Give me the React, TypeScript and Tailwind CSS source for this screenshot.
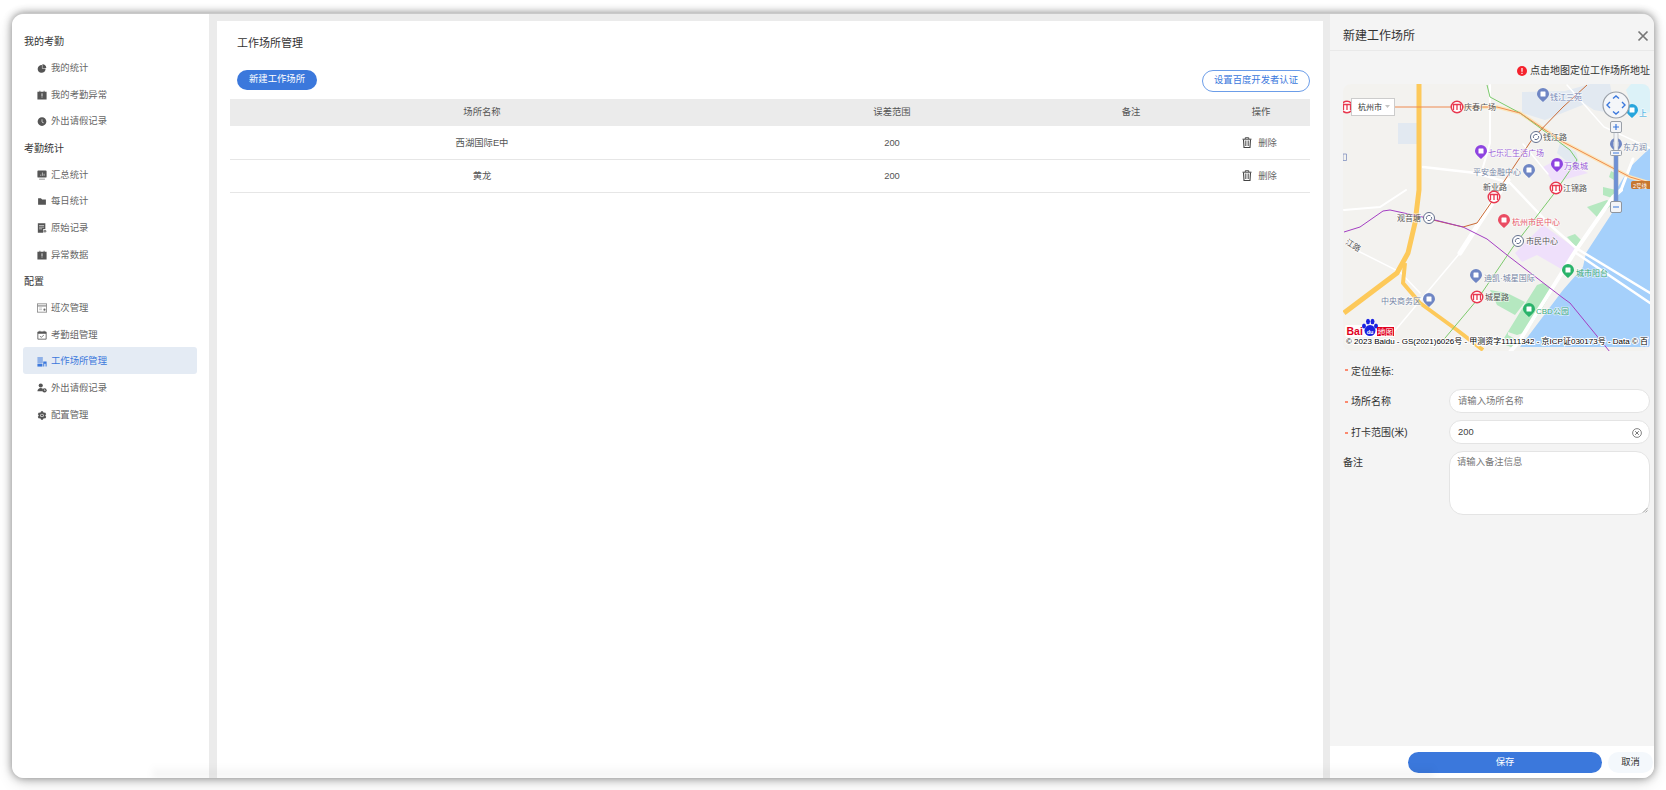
import { AiFillClockCircle, AiFillFolder, AiFillPieChart, AiFillSetting } from "react-icons/ai";

const sm = "h-[10px] w-[10px]";

function CalendarAlert() {
  return (
    <svg viewBox="0 0 12 12" className={sm}>
      <path d="M.5 2h2.500V.8h1V2h4V.8h1V2h2.500v9.500H.5z" fill="#555" />
      <rect x="5.500" y="4" width="1" height="3.500" fill="#fff" />
      <rect x="5.500" y="8" width="1" height="1" fill="#fff" />
    </svg>
  );
}

function MonitorIcon() {
  return (
    <svg viewBox="0 0 12 12" className={sm}>
      <path d="M1.500 .5h9a1 1 0 0 1 1 1v6.500a1 1 0 0 1-1 1h-9a1 1 0 0 1-1-1V1.500a1 1 0 0 1 1-1z" fill="#555" />
      <path d="M2.500 10.500h7v1h-7z" fill="#777" />
      <path d="M4.500 7V5.500M6.500 7V3M8.500 7V4.500" stroke="#fff" strokeWidth=".7" />
    </svg>
  );
}

function DocIcon() {
  return (
    <svg viewBox="0 0 12 12" className={sm}>
      <path d="M1 .3h9v7H7.500v4.400H1z" fill="#555" />
      <path d="M2.500 3h6M2.500 5h6M2.500 7h3.500" stroke="#fff" strokeWidth=".7" />
      <circle cx="9.500" cy="9.800" r="1.700" fill="#888" />
    </svg>
  );
}

function ShiftIcon() {
  return (
    <svg viewBox="0 0 12 12" className={sm}>
      <rect x=".5" y="1" width="11" height="10" fill="none" stroke="#888" strokeWidth="1" />
      <path d="M.5 3.500h11" stroke="#888" strokeWidth="1.400" />
      <path d="M2.500 6h3.500M2.500 8h3.500" stroke="#aaa" strokeWidth=".8" />
      <circle cx="9" cy="8" r="1.300" fill="#666" />
    </svg>
  );
}

function GroupCalendar() {
  return (
    <svg viewBox="0 0 12 12" className={sm}>
      <path d="M1 2.500h10v8.500H1z" fill="none" stroke="#555" strokeWidth="1" />
      <path d="M1 2h10v2.500H1zM3 1h1v1.500H3zM8 1h1v1.500H8z" fill="#555" />
      <path d="M3.500 7.500l1.700 1.200 3-2.500" fill="none" stroke="#555" strokeWidth=".9" />
    </svg>
  );
}

function BuildingIcon() {
  return (
    <svg viewBox="0 0 12 12" className={sm}>
      <path d="M.5 .5h6.500v1.200H.5zM.5 3h6.500v1.200H.5zM.5 5.500h6.500v1.200H.5z" fill="#3b78dc" />
      <path d="M.5 8h6v3.500h-6z" fill="#3b78dc" />
      <path d="M7.500 5.500h4v6h-1.200V8H8.700v3.500H7.500z" fill="#3b78dc" />
    </svg>
  );
}

function UserClock() {
  return (
    <svg viewBox="0 0 12 12" className={sm}>
      <circle cx="4.500" cy="3" r="2.500" fill="#555" />
      <path d="M.5 10c0-2.500 1.800-4 4-4 1 0 1.800.3 2.500.8V10z" fill="#555" />
      <circle cx="9" cy="8.800" r="2.600" fill="#555" />
      <path d="M9 7.500v1.500h1.200" stroke="#fff" strokeWidth=".7" fill="none" />
    </svg>
  );
}

function TrashIcon() {
  return (
    <svg viewBox="0 0 10 11" className="h-[11px] w-[10px]">
      <path d="M.5 2.200h9" stroke="#444" strokeWidth="1" />
      <path d="M3.300 2V.7h3.400V2" fill="none" stroke="#444" strokeWidth=".9" />
      <path d="M1.500 2.500l.5 8h6l.5-8" fill="none" stroke="#444" strokeWidth="1.100" />
      <path d="M3.800 3.500v5.500M6.200 3.500v5.500" stroke="#555" strokeWidth="1.100" />
    </svg>
  );
}

const gray = "text-[11px] text-[#555]";

const navGroups = [
  {
    title: "我的考勤",
    items: [
      { label: "我的统计", icon: <AiFillPieChart className={gray} /> },
      { label: "我的考勤异常", icon: <CalendarAlert /> },
      { label: "外出请假记录", icon: <AiFillClockCircle className={gray} /> },
    ],
  },
  {
    title: "考勤统计",
    items: [
      { label: "汇总统计", icon: <MonitorIcon /> },
      { label: "每日统计", icon: <AiFillFolder className={gray} /> },
      { label: "原始记录", icon: <DocIcon /> },
      { label: "异常数据", icon: <CalendarAlert /> },
    ],
  },
  {
    title: "配置",
    items: [
      { label: "班次管理", icon: <ShiftIcon /> },
      { label: "考勤组管理", icon: <GroupCalendar /> },
      { label: "工作场所管理", icon: <BuildingIcon />, active: true },
      { label: "外出请假记录", icon: <UserClock /> },
      { label: "配置管理", icon: <AiFillSetting className={gray} /> },
    ],
  },
];

const rows = [
  { name: "西湖国际E中", range: "200" },
  { name: "黄龙", range: "200" },
];

function Pin({ x, y, color }: { x: number; y: number; color: string }) {
  return (
    <g transform={`translate(${x} ${y})`}>
      <path d="M-6 -1a6 6 0 1 1 12 0c0 3-3 5-6 8c-3-3-6-5-6-8z" fill={color} />
      <rect x="-2.500" y="-3.500" width="5" height="5" rx=".5" fill="#fff" />
    </g>
  );
}

function Metro({ x, y }: { x: number; y: number }) {
  return (
    <g transform={`translate(${x} ${y})`}>
      <circle r="5.800" fill="#fff" stroke="#e8384f" strokeWidth="1.400" />
      <path d="M-3.500 3v-5.500h7V3M0 -2.500V3" fill="none" stroke="#e8384f" strokeWidth="1.300" />
    </g>
  );
}

function Rail({ x, y }: { x: number; y: number }) {
  return (
    <g transform={`translate(${x} ${y})`}>
      <circle r="5.500" fill="#fff" stroke="#63708e" strokeWidth="1" />
      <path d="M-2.500 1a2.700 2.700 0 0 1 4-3.200M2.500 -1a2.700 2.700 0 0 1-4 3.200" fill="none" stroke="#63708e" strokeWidth="1" />
    </g>
  );
}

function Label({ x, y, color, children }: { x: number; y: number; color: string; children: string }) {
  return (
    <text x={x} y={y} fill={color} fontSize="8" stroke="#fff" strokeWidth="1.500" strokeOpacity=".6" paintOrder="stroke">
      {children}
    </text>
  );
}

function BaiduMap() {
  return (
    <svg viewBox="0 0 307 267" className="block h-[267px] w-[307px]">
      <rect width="307" height="267" fill="#f3f2ef" />
      {/* blocks */}
      <path d="M55 39h19v21H55z" fill="#e2e9f1" />
      <path d="M179 8l43-1 25-7 20 0 6 30-22-4-9-6-20 8-20 8-23-7z" fill="#e2e9f1" />
      <path d="M217 59l16 9 4 14-15-6-8-7z" fill="#e2e9f1" />
      <path d="M288 0h19v28l-11 4-8-12-5-14z" fill="#dcf2f8" />
      <path d="M172 169l28-28 35 25-15 20-26-15-15 7z" fill="#efe0fb" />
      <path d="M200 83l17-9 28 15-25 7-10 2z" fill="#efe0fb" />
      {/* water */}
      <path d="M307 64l-20 19-14 23v17l-30 46-3 14-20 23-43 57h132z" fill="#a5d0fb" />
      {/* green */}
      <path d="M244 123l20-7 6 4-16 13z" fill="#b5e8c0" />
      <path d="M224 153l8-3 8 8-7 5z" fill="#b5e8c0" />
      <path d="M194 201l6-2 10 7-10 17-13 20-7 6-6 2-9-3v3l9 5-4 8-12-5 24-39z" fill="#b5e8c0" />
      <path d="M260 103l13 3-4 8-9-3zM268 87l6 3-3 6-5-3z" fill="#b5e8c0" />
      <path d="M147 206l17 3 18 9-10 13-18-10z" fill="#b5e8c0" />
      {/* white roads */}
      <g fill="none" stroke="#fff" strokeLinecap="round">
        <path d="M147 1v58l-7 24M1 126l36-3 26-17" strokeWidth="2" />
        <path d="M80 83l53 6 34 10 40 42 26 23 74 45M233 169l74 50" strokeWidth="2.500" />
        <path d="M224 1l37 42 46 21M180 60l25 30" strokeWidth="1.500" />
        <path d="M7 163l50 25 20 21M50 249l67-80" strokeWidth="1.500" />
        <path d="M165 96l-12 17-36 56" strokeWidth="5" />
        <path d="M278 106l-8 7-37 53-56 90-10 12" strokeWidth="4" />
        <path d="M290 75l-12 31" strokeWidth="3" />
      </g>
      {/* highway */}
      <g fill="none" strokeLinejoin="round">
        <path d="M114 23h40l23 6 43 29 67 35 20 6" stroke="#fbe6bb" strokeWidth="3.500" />
        <path d="M76 0v106l-4 33-7 30-11 20L1 229" stroke="#fdc95a" strokeWidth="5" />
        <path d="M62 179l-2 20 17 20 37 27 26 20" stroke="#fdc95a" strokeWidth="4" />
      </g>
      {/* metro lines */}
      <g fill="none">
        <path d="M144 1l3 12 30 16 50 37 7 10-24 35-40 52-36 53-37 44" stroke="#7cca6c" strokeWidth="1" />
        <path d="M51 23h103l23 6 43 29 67 35 20 6" stroke="#ee8a50" strokeWidth="1" />
        <path d="M244 1l-24 22-30 31-30 45-10 17-16 23-14 4-30-7" stroke="#c96a34" strokeWidth="1" />
        <path d="M1 148l16-5 23-16 7-1 37 8 36 9 24 12 20 16 56 43 7 5 40 49" stroke="#a33ec2" strokeWidth="1" />
      </g>
      {/* labels */}
      <Metro x={4} y={23} />
      <Metro x={114} y={23} />
      <Label x={121} y={26} color="#555">庆春广场</Label>
      <Pin x={200} y={11} color="#6f86c4" />
      <Label x={207} y={16} color="#7586b6">钱江三苑</Label>
      <Rail x={193} y={53} />
      <Label x={200} y={56} color="#555">钱江路</Label>
      <Pin x={138} y={68} color="#8e44e0" />
      <Label x={145} y={72} color="#9a5fd8">七乐汇生活广场</Label>
      <Label x={130} y={91} color="#7586a6">平安金融中心</Label>
      <Pin x={186} y={87} color="#6f86c4" />
      <Pin x={214} y={81} color="#8e44e0" />
      <Label x={221} y={85} color="#9a5fd8">万象城</Label>
      <Label x={140} y={106} color="#555">新业路</Label>
      <Metro x={213} y={104} />
      <Label x={220} y={107} color="#555">江锦路</Label>
      <Pin x={273} y={61} color="#6f86c4" />
      <Label x={280} y={66} color="#7586a6">东方润</Label>
      <Pin x={289} y={27} color="#27a5dc" />
      <Label x={296} y={32} color="#27a5dc">上</Label>
      <rect x="288" y="97" width="22" height="8" rx="2" fill="#c7772f" />
      <text x="290" y="103.500" fill="#fff" fontSize="5.500">2号线</text>
      <Metro x={151} y={113} />
      <Label x={54} y={137} color="#555">观音塘</Label>
      <Rail x={86} y={134} />
      <Pin x={161} y={137} color="#ea4c62" />
      <Label x={169} y={141} color="#e8586c">杭州市民中心</Label>
      <Rail x={175} y={157} />
      <Label x={183} y={160} color="#555">市民中心</Label>
      <Pin x={133} y={192} color="#6f86c4" />
      <Label x={141} y={197} color="#7586a6">迪凯·城星国际</Label>
      <Pin x={225} y={187} color="#2ab36a" />
      <Label x={233} y={192} color="#3aa97a">城市阳台</Label>
      <Label x={38} y={220} color="#7586a6">中央商务区</Label>
      <Pin x={86} y={216} color="#6f86c4" />
      <Metro x={134} y={213} />
      <Label x={142} y={216} color="#555">城星路</Label>
      <Pin x={186} y={226} color="#2ab36a" />
      <Label x={193} y={230} color="#3aa97a">CBD公园</Label>
      <g transform="rotate(32 4 156)">
        <Label x={4} y={160} color="#555">江路</Label>
      </g>
      <path d="M0 70h3.500v6.500H0z" fill="none" stroke="#8090c0" strokeWidth=".8" />
      {/* city control */}
      <rect x="8.500" y="14.500" width="43" height="17" fill="#fff" stroke="#ccc" />
      <text x="15" y="26" fill="#333" fontSize="8">杭州市</text>
      <path d="M42 21h5l-2.500 3z" fill="#c4c4c4" />
      {/* pan and zoom controls */}
      <rect x="271" y="45" width="4" height="24" fill="#f1f3f6" stroke="#a7abb3" strokeWidth=".6" />
      <rect x="271" y="69" width="4" height="54" fill="#6d90d6" stroke="#8b99bd" strokeWidth=".6" />
      <circle cx="273" cy="21" r="13" fill="#f4f6f9" stroke="#9aa0a8" strokeWidth="1.200" />
      <path d="M270 14.500l3-2.500 3 2.500M270 27.500l3 2.500 3-2.500M267 18l-3 3 3 3M279 18l3 3-3 3" fill="none" stroke="#3b78dc" strokeWidth="1.400" />
      <rect x="267.500" y="37.500" width="11" height="11" rx="1.500" fill="#f3f4f7" stroke="#9aa0a8" />
      <path d="M270 43h6M273 40v6" stroke="#3b78dc" strokeWidth="1.200" />
      <rect x="267.500" y="66.500" width="11" height="5" rx="1" fill="#f3f4f7" stroke="#9aa0a8" />
      <path d="M270 69h6" stroke="#3b78dc" strokeWidth="1" />
      <rect x="267.500" y="117.500" width="11" height="11" rx="1.500" fill="#f3f4f7" stroke="#8f959e" />
      <path d="M270 123h6" stroke="#3b78dc" strokeWidth="1.200" />
      {/* logo */}
      <rect x="2" y="241" width="50" height="12" rx="2" fill="#fff" opacity=".85" />
      <text x="3.500" y="251" fill="#e1001e" fontSize="10.500" fontWeight="700">Bai</text>
      <g fill="#1a22e0" stroke="#fff" strokeWidth=".6" paintOrder="stroke">
        <ellipse cx="27" cy="246.500" rx="5.500" ry="5.500" />
        <ellipse cx="21" cy="242" rx="2" ry="2.500" />
        <ellipse cx="25" cy="237.500" rx="2" ry="2.700" />
        <ellipse cx="29.500" cy="237.500" rx="2" ry="2.700" />
        <ellipse cx="33" cy="242" rx="2" ry="2.500" />
      </g>
      <text x="23.700" y="250" fill="#fff" fontSize="5.500" fontWeight="700">du</text>
      <rect x="34" y="243" width="17" height="9" fill="#e1001e" />
      <text x="34.500" y="250.500" fill="#fff" fontSize="8">地图</text>
      {/* copyright */}
      <text x="3" y="260" fill="#000" fontSize="8" stroke="#fff" strokeWidth="2" paintOrder="stroke">
        © 2023 Baidu - GS(2021)6026号 - 甲测资字11111342 - 京ICP证030173号 - Data © 百
      </text>
    </svg>
  );
}

function Star() {
  return <span className="absolute left-[-6px] top-[5px] h-[2px] w-[3px] bg-[#fb8a70]" />;
}

export default function App() {
  return (
    <div className="h-[790px] w-[1666px] overflow-hidden bg-white px-3 pb-3 pt-[13px] font-['Liberation_Sans','Noto_Sans_CJK_SC',sans-serif]">
      <div className="relative flex h-[765px] overflow-hidden rounded-xl border-t border-[#c9c9c9] bg-[#ebebeb] shadow-[0_0_9px_rgba(0,0,0,0.45),0_5px_16px_rgba(0,0,0,0.12)]">
        {/* Sidebar */}
        <aside className="w-[197px] shrink-0 bg-white pl-3 pr-3 pt-[13px]">
          {navGroups.map((group) => (
            <div key={group.title}>
              <div className="flex h-[26.67px] items-center pt-[3px] text-[10px] text-[#333]">{group.title}</div>
              {group.items.map((item, i) => (
                <div
                  key={i}
                  className={
                    item.active
                      ? "flex h-[26.67px] w-[174px] -translate-x-px items-center gap-[4px] rounded-[3px] bg-[#e4ebf4] pl-[14px] pt-[3px] text-[9.33px] text-[#3b78dc]"
                      : "flex h-[26.67px] w-[174px] -translate-x-px items-center gap-[4px] pl-[14px] pt-[3px] text-[9.33px] text-[#666]"
                  }
                >
                  <span className="flex w-[10px] justify-center">{item.icon}</span>
                  <span className="pt-px">{item.label}</span>
                </div>
              ))}
            </div>
          ))}
        </aside>

        {/* Main */}
        <main className="ml-2 mr-[7px] mt-[7px] flex-1 bg-white px-[13px]">
          <h1 className="pl-[7px] pt-[14px] text-[11px] font-normal leading-[16px] text-[#333]">工作场所管理</h1>
          <div className="mt-[19px] flex items-start justify-between pl-[7px]">
            <button className="h-5 w-20 rounded-full bg-[#3b78dc] text-[9.33px] text-white">新建工作场所</button>
            <button className="h-[22px] w-[108px] rounded-full border border-[#6c9de8] bg-white text-[9.33px] text-[#3b78dc]">
              设置百度开发者认证
            </button>
          </div>
          <div className="mb-px mt-[7px] grid h-[27px] grid-cols-[504px_316px_162px_98px] items-center bg-[#ebebeb] pt-px text-center text-[9.33px] text-[#555]">
            <div>场所名称</div>
            <div>误差范围</div>
            <div>备注</div>
            <div>操作</div>
          </div>
          {rows.map((row) => (
            <div
              key={row.name}
              className="grid h-[33px] grid-cols-[504px_316px_162px_98px] items-center border-b border-[#e6e6e6] pt-px text-center text-[9.33px] text-[#555]"
            >
              <div>{row.name}</div>
              <div>{row.range}</div>
              <div />
              <div className="flex items-center justify-center gap-[6px] pr-[3px] text-[#666]">
                <span className="-mt-[2px]">
                  <TrashIcon />
                </span>
                <span>删除</span>
              </div>
            </div>
          ))}
        </main>

        {/* Drawer */}
        <section className="flex w-[324px] shrink-0 flex-col bg-[#f4f4f4]">
          <header className="flex h-[37px] items-center justify-between border-b border-[#e9e9e9] pl-[13px] pr-1 pt-2 text-[12px] text-[#333]">
            <span>新建工作场所</span>
            <svg viewBox="0 0 12 12" className="mr-px h-3 w-3">
              <path d="M1.500 1.500l9 9M10.500 1.500l-9 9" stroke="#777" strokeWidth="1.700" />
            </svg>
          </header>
          <div className="flex-1 pl-[13px] pr-1">
            <div className="flex h-[33px] items-center justify-end gap-[3px] pt-[6px] text-[10px] text-[#333]">
              <svg viewBox="0 0 10 10" className="h-[10px] w-[10px]">
                <circle cx="5" cy="5" r="5" fill="#f5222d" />
                <path d="M4.400 2h1.200v3.800H4.400zM4.400 6.800h1.200V8H4.400z" fill="#fff" />
              </svg>
              <span>点击地图定位工作场所地址</span>
            </div>
            <div className="w-[307px] overflow-hidden rounded-lg">
              <BaiduMap />
            </div>
            <div className="mt-[12px] flex h-[16px] items-center pl-2 text-[10px] text-[#333]">
              <span className="relative">
                <Star />
                定位坐标:
              </span>
            </div>
            <div className="mt-[10px] flex h-6 items-center">
              <label className="w-[106px] pl-2 text-[10px] text-[#333]">
                <span className="relative">
                  <Star />
                  场所名称
                </span>
              </label>
              <div className="flex h-6 w-[201px] items-center rounded-full border border-[#e4e4e4] bg-white pl-[8px] pt-px text-[9.33px] text-[#777]">
                请输入场所名称
              </div>
            </div>
            <div className="mt-[7px] flex h-6 items-center">
              <label className="w-[106px] pl-2 text-[10px] text-[#333]">
                <span className="relative">
                  <Star />
                  打卡范围(米)
                </span>
              </label>
              <div className="flex h-6 w-[201px] items-center justify-between rounded-full border border-[#e4e4e4] bg-white pl-[8px] pr-[7px] pt-px text-[9.33px] text-[#444]">
                <span>200</span>
                <svg viewBox="0 0 10 10" className="h-[10px] w-[10px]">
                  <circle cx="5" cy="5" r="4.400" fill="none" stroke="#666" strokeWidth=".8" />
                  <path d="M3.200 3.200l3.600 3.600M6.800 3.200L3.200 6.800" stroke="#666" strokeWidth=".9" />
                </svg>
              </div>
            </div>
            <div className="mt-[7px] flex">
              <label className="w-[106px] pt-[4px] text-[10px] text-[#333]">备注</label>
              <div className="relative h-[64px] w-[201px] rounded-[14px] border border-[#e4e4e4] bg-white pl-[7px] pt-[4px] text-[9.33px] text-[#777]">
                请输入备注信息
                <svg viewBox="0 0 6 6" className="absolute bottom-[1px] right-[1px] h-[6px] w-[6px]">
                  <path d="M1 5.500L5.500 1M3.500 5.500l2-2" stroke="#888" strokeWidth=".7" />
                </svg>
              </div>
            </div>
          </div>
          <footer className="flex h-[32px] items-start gap-[6px] bg-white pl-[78px] pt-[6px]">
            <button className="h-[21px] w-[194px] rounded-full bg-[#3b78dc] text-[9.33px] text-white">保存</button>
            <button className="h-[21px] w-[45px] rounded-full bg-[#f4f8fc] text-[9.33px] text-[#333]">取消</button>
          </footer>
        </section>

        {/* soft shade along the bottom edge */}
        <div className="absolute bottom-0 left-[140px] right-[220px] h-[14px] bg-gradient-to-t from-black/5 to-transparent blur-[3px]" />
      </div>
    </div>
  );
}
